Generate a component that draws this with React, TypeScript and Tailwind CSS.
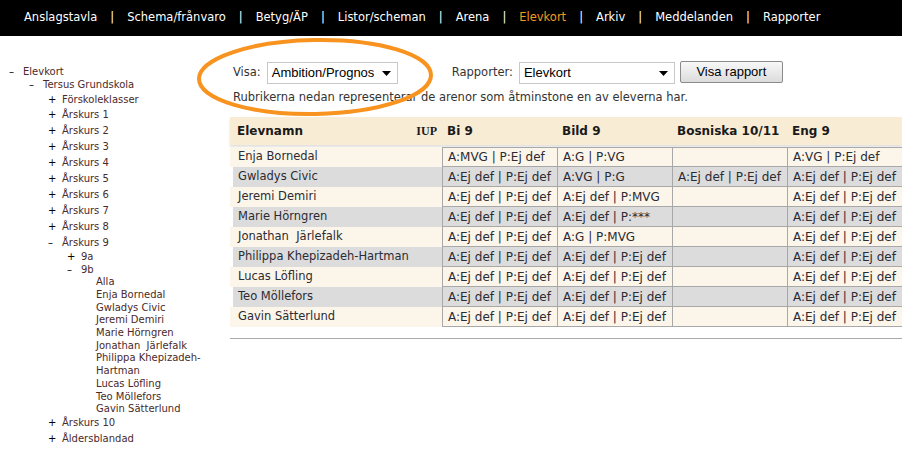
import React from "react";

const font = { fontFamily: '"DejaVu Sans", Verdana, sans-serif' };

const menu = ["Anslagstavla", "Schema/frånvaro", "Betyg/ÄP", "Listor/scheman", "Arena", "Elevkort", "Arkiv", "Meddelanden", "Rapporter"];

const students = [
  ["Enja Bornedal", "A:MVG | P:Ej def", "A:G | P:VG", "", "A:VG | P:Ej def"],
  ["Gwladys Civic", "A:Ej def | P:Ej def", "A:VG | P:G", "A:Ej def | P:Ej def", "A:Ej def | P:Ej def"],
  ["Jeremi Demiri", "A:Ej def | P:Ej def", "A:Ej def | P:MVG", "", "A:Ej def | P:Ej def"],
  ["Marie Hörngren", "A:Ej def | P:Ej def", "A:Ej def | P:***", "", "A:Ej def | P:Ej def"],
  ["Jonathan\u00a0 Järlefalk", "A:Ej def | P:Ej def", "A:G | P:MVG", "", "A:Ej def | P:Ej def"],
  ["Philippa Khepizadeh-Hartman", "A:Ej def | P:Ej def", "A:Ej def | P:Ej def", "", "A:Ej def | P:Ej def"],
  ["Lucas Löfling", "A:Ej def | P:Ej def", "A:Ej def | P:Ej def", "", "A:Ej def | P:Ej def"],
  ["Teo Möllefors", "A:Ej def | P:Ej def", "A:Ej def | P:Ej def", "", "A:Ej def | P:Ej def"],
  ["Gavin Sätterlund", "A:Ej def | P:Ej def", "A:Ej def | P:Ej def", "", "A:Ej def | P:Ej def"],
];

const treeStudents = ["Alla", "Enja Bornedal", "Gwladys Civic", "Jeremi Demiri", "Marie Hörngren", "Jonathan\u00a0 Järlefalk", "Philippa Khepizadeh-", "Hartman", "Lucas Löfling", "Teo Möllefors", "Gavin Sätterlund"];

function Node({ sign, label, indent, h }: { sign: string; label: string; indent: number; h: number }) {
  return (
    <div className="flex items-center" style={{ paddingLeft: indent, height: h }}>
      <span className="w-[14px] text-[10px] text-black leading-none">{sign}</span>
      <span className="text-[10px] text-[#4a2a2a] leading-none">{label}</span>
    </div>
  );
}

function Arrow() {
  return (
    <svg width="9" height="5" viewBox="0 0 9 5" className="shrink-0">
      <path d="M0 0 L9 0 L4.5 5 Z" fill="#000" />
    </svg>
  );
}

export default function App() {
  return (
    <div className="relative w-[902px] h-[455px] bg-white overflow-hidden" style={font}>
      {/* Top nav */}
      <div className="h-[36px] bg-black flex items-center pl-[24px] text-[11.5px] text-white">
        {menu.map((m, i) => (
          <React.Fragment key={m}>
            {i > 0 && <span className="px-[13px]">|</span>}
            <span className={m === "Elevkort" ? "text-[#f39a1e]" : ""}>{m}</span>
          </React.Fragment>
        ))}
      </div>

      <div className="flex">
        {/* Sidebar tree */}
        <div className="w-[230px] pt-[30px] pl-[9px]">
          <Node sign="–" label="Elevkort" indent={0} h={12} />
          <Node sign="–" label="Tersus Grundskola" indent={20} h={13} />
          <div className="pt-[1px]">
            <Node sign="+" label="Förskoleklasser" indent={39} h={15} />
            {[1, 2, 3, 4, 5, 6, 7, 8].map((n) => (
              <Node key={n} sign="+" label={`Årskurs ${n}`} indent={39} h={16} />
            ))}
            <Node sign="–" label="Årskurs 9" indent={39} h={15} />
            <Node sign="+" label="9a" indent={58} h={14} />
            <Node sign="–" label="9b" indent={58} h={12} />
            <div className="pl-[87px]">
              {treeStudents.map((s) => (
                <div key={s} className="h-[12.7px] flex items-center text-[10px] text-[#4a2a2a] leading-none">{s}</div>
              ))}
            </div>
            <div>
              <Node sign="+" label="Årskurs 10" indent={39} h={15} />
              <Node sign="+" label="Åldersblandad" indent={39} h={16} />
            </div>
          </div>
        </div>

        {/* Main */}
        <div className="flex-1 pt-[25px]">
          <div className="flex items-center h-[24px] pl-[3px] text-[11.5px] text-[#333]">
            <span className="mr-[6px]">Visa:</span>
            <div className="w-[131px] h-[22px] border border-[#c8c8c8] bg-white flex items-center justify-between pl-[4px] pr-[6px] text-[13px] text-black" style={{ fontFamily: '"Liberation Sans", Arial, sans-serif' }}>
              <span>Ambition/Prognos</span>
              <Arrow />
            </div>
            <span className="ml-[54px] mr-[6px]">Rapporter:</span>
            <div className="w-[156px] h-[22px] border border-[#c8c8c8] bg-white flex items-center justify-between pl-[4px] pr-[6px] text-[13px] text-black" style={{ fontFamily: '"Liberation Sans", Arial, sans-serif' }}>
              <span>Elevkort</span>
              <Arrow />
            </div>
            <div className="ml-[5px] w-[103px] h-[22px] mt-[-2px] border border-[#8a8a8a] rounded-[2px] bg-gradient-to-b from-[#f8f8f8] to-[#dcdcdc] flex items-center justify-center text-[13px] text-black" style={{ fontFamily: '"Liberation Sans", Arial, sans-serif' }}>
              Visa rapport
            </div>
          </div>
          <div className="pl-[3px] mt-[5px] h-[14px] text-[11.5px] text-[#333] leading-[14px]">
            Rubrikerna nedan representerar de arenor som åtminstone en av eleverna har.
          </div>

          {/* Table */}
          <div className="mt-[13px]">
            <div className="flex h-[28px] items-center bg-[#f8ecd5] shadow-[0_2px_2px_rgba(0,0,0,0.12)] text-[12px] font-bold text-[#1a1a1a]">
              <div className="w-[212px] flex items-center justify-between pl-[7px] pr-[5px]">
                <span>Elevnamn</span>
                <span style={{ fontFamily: '"Liberation Serif", serif' }} className="text-[12px]">IUP</span>
              </div>
              <div className="w-[115px] pl-[5px]">Bi 9</div>
              <div className="w-[115px] pl-[5px]">Bild 9</div>
              <div className="w-[115px] pl-[5px]">Bosniska 10/11</div>
              <div className="flex-1 pl-[5px]">Eng 9</div>
            </div>
            <div className="mt-[2px]">
              {students.map((r, i) => (
                <div key={i} className={`flex h-[20px] text-[#2b2b33] ${i % 2 ? "bg-[#dcdcdc] ml-[3px]" : "bg-[#fcf5ea]"}`}>
                  <div className={`${i % 2 ? "w-[209px] pl-[5px]" : "w-[212px] pl-[8px]"} flex items-center text-[11.5px]`}>{r[0]}</div>
                  {r.slice(1).map((c, j) => (
                    <div key={j} className={`${j === 3 ? "flex-1" : "w-[115px]"} flex items-center pl-[5px] text-[12px] border-l border-b border-[#a8a8a8] ${i === 0 ? "border-t" : ""} whitespace-nowrap overflow-hidden`}>
                      {c}
                    </div>
                  ))}
                </div>
              ))}
            </div>
            <div className="mt-[11px] h-[1px] bg-[#aaaaaa]" />
          </div>
        </div>
      </div>

      {/* Orange annotation ellipse */}
      <svg className="absolute left-0 top-0 pointer-events-none" width="902" height="455">
        <ellipse cx="315" cy="77" rx="116" ry="37" fill="none" stroke="#f7931e" strokeWidth="4" transform="rotate(-1 315 77)" />
      </svg>
    </div>
  );
}
